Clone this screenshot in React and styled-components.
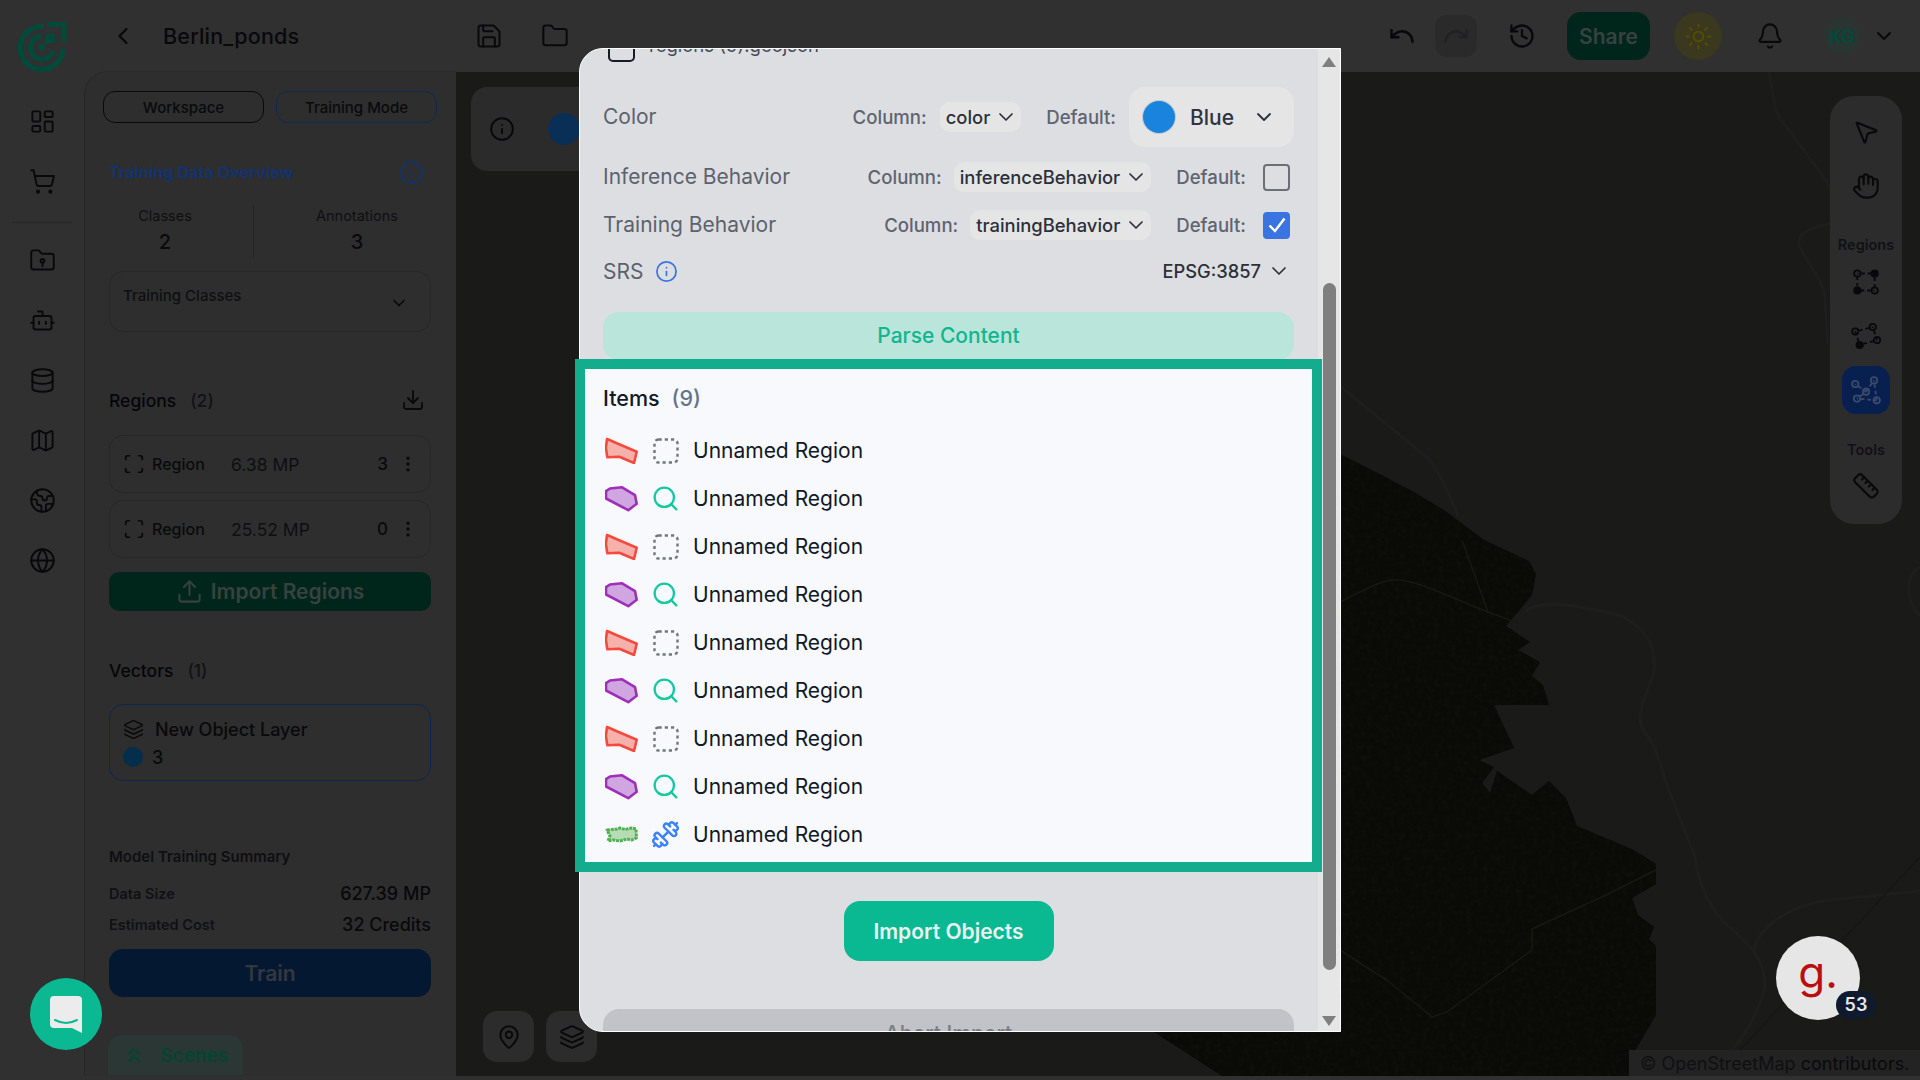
import React from 'react';
import styled, { createGlobalStyle } from 'styled-components';
import {
  Bell, Bot, ChevronDown, ChevronLeft, ChevronsUp, Database, Download, Dumbbell, EllipsisVertical,
  Earth, Folder, Globe, Hand, History, Info, Layers, LayoutDashboard, Map as MapIcon,
  MapPin, MousePointer2, Redo, Ruler, Save, Scan, Search, ShoppingCart, Sun, Undo, Upload,
} from 'lucide-react';

const GlobalStyle = createGlobalStyle`
  html, body { margin: 0; padding: 0; background: #303030; }
  * { box-sizing: border-box; }
  body { font-family: Inter, "Liberation Sans", sans-serif; }
`;

const DARK = '#09090c';
const TEAL = '#0ab892';

const Page = styled.div`
  position: relative;
  width: 1920px;
  height: 1080px;
  overflow: hidden;
  display: flex;
  background: #303030;
  color: ${DARK};
`;

/* left rail */
const Rail = styled.nav`
  width: 84px;
  flex: none;
  display: flex;
  flex-direction: column;
  padding: 16px 0 0 0;
`;

const Logo = styled.svg`
  display: block;
  margin: 0 0 11px 10px;
`;

const RailItem = styled.div`
  width: 84px;
  height: 60px;
  display: flex;
  align-items: center;
  justify-content: center;
`;

const RailDivider = styled.div`
  width: 60px;
  height: 1px;
  margin: 11px 0 7px 12px;
  background: #262628;
`;

const Column = styled.div`
  flex: 1;
  min-width: 0;
  display: flex;
  flex-direction: column;
`;

/* top bar */
const TopBar = styled.header`
  height: 72px;
  flex: none;
  display: flex;
  align-items: center;
  padding: 0 24px 0 25px;
`;

const BackWrap = styled.div`
  display: flex;
  width: 28px;
`;

const Title = styled.h1`
  width: 310px;
  margin: 0 0 0 26px;
  font-size: 21.5px;
  font-weight: 500;
  letter-spacing: 0.2px;
  color: ${DARK};
`;

const TopIcon = styled.div`
  display: flex;
  align-items: center;
  justify-content: center;
  flex: none;
  width: ${p => p.$w || 28}px;
  height: ${p => p.$h || 28}px;
  margin-left: ${p => p.$ml || 0}px;
  border-radius: ${p => p.$radius || 0};
  background: ${p => p.$bg || 'transparent'};
`;

const Spacer = styled.div`
  flex: 1;
`;

const ShareButton = styled.div`
  width: 83px;
  height: 48px;
  margin-left: 31px;
  display: flex;
  align-items: center;
  justify-content: center;
  border-radius: 14px;
  background: #00261c;
  color: #37423f;
  font-size: 21px;
  font-weight: 600;
`;

const Avatar = styled.div`
  width: 36px;
  height: 36px;
  margin-left: 40px;
  display: flex;
  align-items: center;
  justify-content: center;
  border-radius: 50%;
  background: #283531;
  color: #004a39;
  font-size: 18px;
  font-weight: 700;
`;

const Body = styled.div`
  height: 1004px;
  display: flex;
`;

/* side panel */
const Panel = styled.aside`
  width: 372px;
  flex: none;
  border-left: 1px solid #272729;
  border-top: 1px solid #2a2a2c;
  border-top-left-radius: 24px;
  background: #2e2e2e;
  margin-top: -1px;
`;

const ModeRow = styled.div`
  display: flex;
  gap: 12px;
  padding: 19px 19px 0 18px;
`;

const ModeButton = styled.div`
  flex: 1;
  height: 32px;
  display: flex;
  align-items: center;
  justify-content: center;
  border: 1px solid ${p => (p.$active ? '#0b2a55' : '#09090c')};
  border-radius: 12px;
  font-size: 15px;
  font-weight: 500;
  color: #0a0a0d;
`;

const PanelBody = styled.div`
  padding: 0 25px 0 24px;
  position: relative;
`;

const OverviewHead = styled.div`
  height: 24px;
  margin-top: 37px;
  display: flex;
  align-items: center;
  justify-content: space-between;
  padding-right: 7px;
  font-size: 16.2px;
  font-weight: 700;
  color: #12336e;
`;

const Stats = styled.div`
  height: 53px;
  margin-top: 21px;
  display: flex;
`;

const Stat = styled.div`
  display: flex;
  flex-direction: column;
  align-items: center;
  width: ${p => p.$w}px;
  padding: ${p => p.$pad};
  border-right: ${p => (p.$divider ? '1px solid #232326' : 'none')};
  font-size: 14.5px;
  color: #0f0f13;
  padding-top: 2px;
`;

const StatValue = styled.div`
  margin-top: 6px;
  font-size: 20px;
  font-weight: 500;
  color: #0a0a0d;
`;

const ClassesBox = styled.div`
  height: 61px;
  margin-top: 13px;
  display: flex;
  justify-content: space-between;
  padding: 14px 21px 0 13px;
  border: 1px solid #272729;
  border-radius: 14px;
  font-size: 15px;
  font-weight: 500;
  color: #0f0f13;
`;

const ClassesChevron = styled.div`
  margin-top: 7px;
  height: 20px;
`;

const SectionHead = styled.div`
  height: 28px;
  margin-top: ${p => p.$mt}px;
  display: flex;
  align-items: center;
  justify-content: space-between;
  padding-right: 6px;
  font-size: 17.5px;
  font-weight: 500;
  color: #060609;
`;

const Count = styled.span`
  margin-left: 14px;
  color: #121216;
`;

const RegionRow = styled.div`
  height: 58px;
  margin-top: ${p => p.$mt}px;
  display: flex;
  align-items: center;
  padding: 0 12px 0 13px;
  border: 1px solid #272729;
  border-radius: 14px;
  font-size: 16px;
  font-weight: 500;
`;

const RegionName = styled.span`
  margin-left: 7px;
  width: 79px;
  color: #0a0a0d;
`;

const RegionSize = styled.span`
  flex: 1;
  font-size: 17.5px;
  font-weight: 400;
  color: #0f0f13;
`;

const RegionCount = styled.span`
  font-size: 17px;
  color: #09090c;
`;

const KebabWrap = styled.span`
  display: flex;
  margin-left: 10px;
`;

const ImportRegions = styled.div`
  height: 39px;
  margin-top: 14px;
  display: flex;
  align-items: center;
  justify-content: center;
  gap: 8px;
  border-radius: 10px;
  background: #00261c;
  font-size: 21px;
  font-weight: 600;
  color: #37423f;
`;

const VectorCard = styled.div`
  height: 77px;
  margin-top: 20px;
  padding: 11px 14px 0 13px;
  border: 1px solid #0c2650;
  border-radius: 14px;
`;

const VectorLine = styled.div`
  display: flex;
  align-items: center;
  height: 26px;
  margin-top: ${p => p.$mt || 0}px;
  gap: ${p => p.$gap}px;
  font-size: 18px;
  font-weight: 500;
  color: #09090c;
`;

const VectorDot = styled.span`
  width: 20px;
  height: 20px;
  border-radius: 50%;
  background: #032e4c;
`;

const SummaryTitle = styled.div`
  height: 20px;
  margin-top: 66px;
  font-size: 15px;
  font-weight: 600;
  line-height: 20px;
  color: #0f0f13;
`;

const SummaryRow = styled.div`
  height: 24px;
  margin-top: ${p => p.$mt}px;
  display: flex;
  align-items: center;
  justify-content: space-between;
  font-size: 14.5px;
  font-weight: 600;
  color: #111115;
`;

const SummaryValue = styled.span`
  font-size: 18px;
  font-weight: 500;
  color: #09090c;
`;

const TrainButton = styled.div`
  height: 48px;
  margin-top: 13px;
  display: flex;
  align-items: center;
  justify-content: center;
  border-radius: 14px;
  background: #051832;
  font-size: 21px;
  font-weight: 600;
  color: #33383f;
`;

const ScenesTab = styled.div`
  width: 135px;
  height: 40px;
  margin: 38px 0 0 -1px;
  display: flex;
  align-items: center;
  gap: 14px;
  padding-left: 14px;
  border-radius: 14px 14px 0 0;
  background: #2b3735;
  font-size: 19px;
  font-weight: 600;
  color: #00452f;
`;

/* map */
const MapArea = styled.main`
  position: relative;
  flex: 1;
  background: #1a1a19;
  overflow: hidden;
`;

const MapArt = styled.svg`
  position: absolute;
  left: 0;
  top: 0;
`;

const InfoBar = styled.div`
  position: absolute;
  left: 15px;
  top: 15px;
  width: 200px;
  height: 84px;
  display: flex;
  align-items: center;
  gap: 33px;
  padding-left: 18px;
  border-radius: 16px;
  background: #2b2b2c;
`;

const InfoDot = styled.span`
  width: 32px;
  height: 32px;
  border-radius: 50%;
  background: #0a2f56;
`;

const MapButtons = styled.div`
  position: absolute;
  left: 27px;
  bottom: 14px;
  display: flex;
  gap: 12px;
`;

const MapButton = styled.div`
  width: 51px;
  height: 51px;
  display: flex;
  align-items: center;
  justify-content: center;
  border-radius: 14px;
  background: #2c2c2d;
`;

const ToolPanel = styled.div`
  position: absolute;
  right: 18px;
  top: 24px;
  width: 72px;
  height: 428px;
  display: flex;
  flex-direction: column;
  align-items: center;
  border-radius: 24px;
  background: #2c2c2d;
`;

const ToolItem = styled.div`
  width: 48px;
  height: 48px;
  flex: none;
  margin-top: ${p => p.$mt || 0}px;
  display: flex;
  align-items: center;
  justify-content: center;
  border-radius: 14px;
  background: ${p => (p.$active ? '#072050' : 'transparent')};
`;

const ToolLabel = styled.div`
  height: 20px;
  margin-top: ${p => p.$mt}px;
  font-size: 14.5px;
  font-weight: 600;
  line-height: 20px;
  color: #111115;
`;

const Attribution = styled.div`
  position: absolute;
  right: 0;
  bottom: 0;
  width: 291px;
  height: 26px;
  display: flex;
  align-items: center;
  padding-left: 11px;
  background: #232323;
  font-size: 18px;
  white-space: nowrap;
  color: #0a0a0c;
`;

const AttributionLink = styled.span`
  color: #101012;
`;

/* floating widgets */
const ChatBubble = styled.div`
  position: absolute;
  left: 30px;
  top: 978px;
  width: 72px;
  height: 72px;
  display: flex;
  align-items: center;
  justify-content: center;
  border-radius: 50%;
  background: ${TEAL};
`;

const GradeBadge = styled.div`
  position: absolute;
  left: 1776px;
  top: 936px;
  width: 84px;
  height: 84px;
  display: flex;
  align-items: center;
  justify-content: center;
  border-radius: 50%;
  background: #e6e6e6;
  color: #b90f0f;
  font-size: 44px;
  font-weight: 400;
  line-height: 1;
  padding-bottom: 12px;
`;

const GradeCount = styled.span`
  position: absolute;
  left: 60px;
  top: 55px;
  width: 40px;
  height: 28px;
  display: flex;
  align-items: center;
  justify-content: center;
  border-radius: 14px;
  background: #0f1a2e;
  color: #e8e8e8;
  font-size: 18px;
  font-weight: 600;
`;

/* modal */
const Modal = styled.section`
  position: absolute;
  left: 579px;
  top: 48px;
  width: 762px;
  height: 984px;
  display: flex;
  background: #dddee1;
  border: 1px solid #fff;
  border-radius: 24px 0 0 24px;
`;

const ModalContent = styled.div`
  position: relative;
  z-index: 1;
  width: 738px;
  flex: none;
  padding: 0 24px 0 23px;
  clip-path: inset(0 -10px 0 -10px);
`;

const FileRow = styled.div`
  height: 27px;
  margin-top: -14px;
  display: flex;
  gap: 14px;
  padding-left: 5px;
  font-size: 18.5px;
  color: #454b5a;
`;

const FileBox = styled.div`
  width: 27px;
  height: 27px;
  border: 2.5px solid #171b24;
  border-radius: 5px;
`;

const FileName = styled.span`
  margin-top: -1px;
  line-height: 22px;
`;

const FieldRow = styled.div`
  height: ${p => p.$h}px;
  margin-top: ${p => p.$mt}px;
  display: flex;
  align-items: center;
  padding-right: ${p => p.$pr || 0}px;
`;

const FieldLabel = styled.span`
  margin: -1px auto 0 0;
  font-size: 21px;
  color: #5c626d;
`;

const FieldHint = styled.span`
  margin: ${p => p.$m || '0'};
  font-size: 18.6px;
  font-weight: 500;
  color: #5e6470;
`;

const SelectBox = styled.div`
  height: 30px;
  display: flex;
  align-items: center;
  gap: 4px;
  padding: 0 3px 0 6px;
  border-radius: 10px;
  background: #e5e5e6;
  font-size: 18.4px;
  font-weight: 500;
  color: #2b303b;
`;

const ColorSelect = styled.div`
  width: 165px;
  height: 60px;
  margin-left: 13px;
  display: flex;
  align-items: center;
  padding: 0 18px 0 14px;
  border-radius: 16px;
  background: #e5e5e6;
  font-size: 21px;
  font-weight: 500;
  color: #2f3440;
`;

const ColorDot = styled.span`
  width: 32px;
  height: 32px;
  flex: none;
  margin-right: 15px;
  border-radius: 50%;
  background: #1a83dd;
  box-shadow: 0 0 0 1px #c3cbd3;
`;

const ColorName = styled.span`
  flex: 1;
`;

const Check = styled.div`
  width: 27px;
  height: 27px;
  margin-left: 17px;
  display: flex;
  align-items: center;
  justify-content: center;
  border: 2.5px solid ${p => (p.$on ? '#3a74e0' : '#6b7078')};
  border-radius: 4px;
  background: ${p => (p.$on ? '#3a74e0' : 'transparent')};
`;

const SrsLabel = styled.span`
  display: flex;
  align-items: center;
  gap: 12px;
  margin-right: auto;
  font-size: 21px;
  color: #5c626d;
`;

const SrsValue = styled.span`
  display: flex;
  align-items: center;
  gap: 6px;
  font-size: 18.3px;
  font-weight: 500;
  color: #2b303b;
`;

const ParseButton = styled.div`
  height: 48px;
  margin-top: 29px;
  padding-bottom: 1px;
  display: flex;
  align-items: center;
  justify-content: center;
  border-radius: 16px;
  background: #b9e5db;
  font-size: 21px;
  font-weight: 500;
  color: #10b68f;
`;

const ItemsBox = styled.div`
  width: 747px;
  margin: -1px 0 0 -28px;
  padding: 15px 0 4px 18px;
  border: 10px solid #13ad8e;
  background: #f8f9fc;
`;

const ItemsHead = styled.div`
  height: 28px;
  display: flex;
  align-items: center;
  gap: 12px;
  font-size: 21.5px;
  font-weight: 500;
  color: #111827;
`;

const ItemsCount = styled.span`
  color: #64748b;
`;

const ItemsList = styled.ul`
  list-style: none;
  margin: 14px 0 0;
  padding: 0 0 0 2px;
`;

const ItemRow = styled.li`
  height: 48px;
  display: flex;
  align-items: center;
  font-size: 21px;
  color: #111827;
`;

const ShapeSlot = styled.span`
  display: flex;
  width: 48px;
  margin-top: 1px;
`;

const TypeSlot = styled.span`
  display: flex;
  width: ${p => (p.$shift ? 42 : 40)}px;
  margin-left: ${p => (p.$shift ? -2 : 0)}px;
  margin-top: 1px;
`;

const ImportObjects = styled.div`
  width: 210px;
  height: 60px;
  margin: 29px auto 0;
  display: flex;
  align-items: center;
  justify-content: center;
  border-radius: 16px;
  background: ${TEAL};
  font-size: 21px;
  font-weight: 600;
  color: #e8f3ef;
`;

const AbortButton = styled.div`
  height: 48px;
  margin-top: 48px;
  display: flex;
  align-items: center;
  justify-content: center;
  border-radius: 16px;
  background: #c1c3c8;
  font-size: 21px;
  font-weight: 500;
  color: #7a7e88;
`;

const ScrollTrack = styled.div`
  position: relative;
  flex: 1;
  background: #e6e6e6;
`;

const ScrollThumb = styled.div`
  position: absolute;
  left: 5px;
  top: 234px;
  width: 13px;
  height: 687px;
  border-radius: 7px;
  background: #7f7f7f;
`;

const ScrollArrow = styled.div`
  position: absolute;
  left: 4px;
  ${p => (p.$down ? 'bottom: 5px;' : 'top: 8px;')}
  width: 0;
  height: 0;
  border-left: 7.5px solid transparent;
  border-right: 7.5px solid transparent;
  ${p => (p.$down ? 'border-top' : 'border-bottom')}: 10px solid #7f7f7f;
`;

const FOREST =
  '1340,454 1362,465 1414,492 1444,510 1484,540 1529,561 1536,574 1532,595 1506,626 1530,642 1518,650 1540,662 1532,676 1543,685 1549,705 1494,705 1514,748 1479,760 1494,767 1482,783 1490,793 1497,771 1532,795 1549,781 1566,798 1577,826 1634,850 1656,864 1656,884 1632,898 1638,915 1654,927 1649,939 1656,946 1656,1015 1632,1056 1629,1076 1222,1076 1154,1032 1000,900 1200,500';

const ROADS = [
  'M1769 72 C1775 100 1772 110 1785 125 L1825 179 L1845 215',
  'M1880 215 C1840 222 1795 225 1799 245 C1805 262 1825 280 1825 300 L1828 344',
  'M1340 386 L1430 460 C1440 475 1450 495 1458 516',
  'M1525 612 C1535 602 1560 600 1621 616 C1650 630 1656 650 1654 670 C1650 690 1635 710 1642 728 C1655 745 1658 755 1665 780 L1695 857 C1700 900 1725 925 1732 929 C1750 945 1765 960 1765 985 C1760 1010 1745 1035 1732 1050',
  'M1754 950 C1760 925 1790 905 1830 900 L1920 891',
  'M1920 567 C1905 575 1905 600 1920 616',
];

const FOREST_ROADS = [
  'M1340 602 C1365 590 1380 580 1395 580 C1420 580 1455 600 1488 612 L1518 623',
  'M1462 540 L1488 612',
  'M1340 950 L1388 981 L1432 1017 L1447 1012 L1532 950 L1532 929 L1606 895 L1656 870',
];

const RAIL_TOP = [LayoutDashboard, ShoppingCart];
const RAIL_BOTTOM = [Bot, Database, MapIcon, Earth, Globe];

const FolderKeyhole = () => (
  <svg width="27" height="27" viewBox="0 0 24 24" fill="none" stroke="#09090c" strokeWidth="1.7" strokeLinecap="round" strokeLinejoin="round">
    <path d="M20 20a2 2 0 0 0 2-2V8a2 2 0 0 0-2-2h-7.9a2 2 0 0 1-1.69-.9L9.6 3.9A2 2 0 0 0 7.93 3H4a2 2 0 0 0-2 2v13a2 2 0 0 0 2 2Z" />
    <circle cx="12" cy="12.3" r="1.7" />
    <path d="M12 14v3" />
  </svg>
);

const Node = ({ cx, cy, filled, color }) => (
  <circle cx={cx} cy={cy} r="3.2" fill={filled ? color : 'none'} stroke={color} strokeWidth="1.8" />
);

const NodeShape = ({ points, lines, color = '#09090c' }) => (
  <svg width="30" height="30" viewBox="-15 -15 30 30" fill="none">
    {lines.map(([a, b]) => (
      <line
        key={`${a}-${b}`}
        x1={points[a][0]}
        y1={points[a][1]}
        x2={points[b][0]}
        y2={points[b][1]}
        stroke={color}
        strokeWidth="1.8"
        strokeDasharray="3.5 3"
        strokeDashoffset="-4"
      />
    ))}
    {points.map(([x, y, filled]) => (
      <Node key={`${x}-${y}`} cx={x} cy={y} filled={filled} color={color} />
    ))}
  </svg>
);

const RectNodes = () => (
  <NodeShape
    points={[[-8.7, -8.5, false], [8.7, -8.5, true], [8.7, 8.5, false], [-8.7, 8.5, true]]}
    lines={[[0, 1], [1, 2], [2, 3], [3, 0]]}
  />
);

const PolyNodes = () => (
  <NodeShape
    points={[[-10.7, -4.5, false], [6.7, -9, false], [11, 4, false], [-6.3, 9, true]]}
    lines={[[0, 1], [1, 2], [2, 3], [3, 0]]}
  />
);

const MeshNodes = () => (
  <NodeShape
    color="#3c4a6a"
    points={[[-10.7, -6, false], [8, -9.6, false], [0, 1.7, false], [-9, 8.6, false], [10.7, 10.3, false]]}
    lines={[[0, 2], [1, 2], [2, 3], [1, 4], [3, 4]]}
  />
);

const RedShape = () => (
  <svg width="33" height="27" viewBox="0 0 33 27">
    <polygon
      points="2,2 31.7,14.7 29,26 14.3,19.7 2.3,20.3 0.9,10.7"
      fill="#f6b1ac"
      stroke="#f44a3c"
      strokeWidth="2.6"
      strokeLinejoin="round"
    />
  </svg>
);

const PurpleShape = () => (
  <svg width="33" height="27" viewBox="0 0 33 27">
    <polygon
      points="1,6.2 5,3.5 16.7,2.2 30,10.2 31.7,18.8 23.3,25.2 1,13.5"
      fill="#cfa6df"
      stroke="#a02fb8"
      strokeWidth="2.6"
      strokeLinejoin="round"
    />
  </svg>
);

const GreenShape = () => (
  <svg width="33" height="27" viewBox="0 0 33 27">
    <polygon
      points="2,9 12,8 15,7 20,8.5 27,7 31,8 31.5,17 27,19 22,18 15,20 8,19 3,20 5,15"
      fill="#b6dcb6"
      stroke="#4fb04f"
      strokeWidth="3"
      strokeDasharray="3 0.8"
      strokeLinejoin="round"
    />
  </svg>
);

const DashedSquare = () => (
  <svg width="26" height="26" viewBox="0 0 26 26" fill="none">
    <rect x="1.5" y="1.5" width="23" height="23" rx="4" stroke="#71757f" strokeWidth="2.4" strokeDasharray="3.2 3.05" />
  </svg>
);

const SearchType = () => <Search size={29} color="#13c9a2" strokeWidth={1.9} />;
const DumbbellType = () => <Dumbbell size={29} color="#3b82f6" strokeWidth={2} />;

const ITEMS = [
  { shape: RedShape, type: DashedSquare },
  { shape: PurpleShape, type: SearchType, shift: true },
  { shape: RedShape, type: DashedSquare },
  { shape: PurpleShape, type: SearchType, shift: true },
  { shape: RedShape, type: DashedSquare },
  { shape: PurpleShape, type: SearchType, shift: true },
  { shape: RedShape, type: DashedSquare },
  { shape: PurpleShape, type: SearchType, shift: true },
  { shape: GreenShape, type: DumbbellType, shift: true },
];

const App = () => (
  <Page>
    <GlobalStyle />
    <Rail>
      <Logo width="64" height="64" viewBox="0 0 64 64" fill="none" stroke="#004a3c" strokeWidth="5.2">
        <path d="M34 10.5 A21.5 21.5 0 1 0 53.2 33" />
        <path d="M31 20.3 A11.5 11.5 0 1 0 43 35" />
        <path d="M37 8.5 H54 V26" />
        <rect x="36" y="18" width="9" height="9" fill="#004a3c" stroke="none" />
        <circle cx="31.5" cy="31.5" r="3.4" fill="#004a3c" stroke="none" />
        <path d="M32 31 L38 25" strokeWidth="2" />
      </Logo>
      {RAIL_TOP.map((Icon, i) => (
        <RailItem key={i}>
          <Icon size={27} color={DARK} strokeWidth={1.7} />
        </RailItem>
      ))}
      <RailDivider />
      <RailItem><FolderKeyhole /></RailItem>
      {RAIL_BOTTOM.map((Icon, i) => (
        <RailItem key={i}>
          <Icon size={27} color={DARK} strokeWidth={1.7} />
        </RailItem>
      ))}
    </Rail>

    <Column>
      <TopBar>
        <BackWrap>
          <ChevronLeft size={28} color={DARK} strokeWidth={2} />
        </BackWrap>
        <Title>Berlin_ponds</Title>
        <TopIcon $w={32}><Save size={28} color={DARK} strokeWidth={1.7} /></TopIcon>
        <TopIcon $w={32} $ml={34}><Folder size={28} color={DARK} strokeWidth={1.7} /></TopIcon>
        <Spacer />
        <TopIcon><Undo size={28} color={DARK} strokeWidth={2.2} /></TopIcon>
        <TopIcon $w={42} $h={42} $ml={19} $radius="12px" $bg="#2a2a2b"><Redo size={28} color="#222224" strokeWidth={2} /></TopIcon>
        <TopIcon $ml={31}><History size={28} color={DARK} strokeWidth={2} /></TopIcon>
        <ShareButton>Share</ShareButton>
        <TopIcon $w={48} $h={48} $ml={24} $radius="50%" $bg="#3a381e"><Sun size={29} color="#544d00" strokeWidth={1.7} /></TopIcon>
        <TopIcon $ml={34}><Bell size={28} color={DARK} strokeWidth={1.8} /></TopIcon>
        <Avatar>KG</Avatar>
        <TopIcon $w={24} $ml={12}><ChevronDown size={24} color={DARK} strokeWidth={2} /></TopIcon>
      </TopBar>

      <Body>
        <Panel>
          <ModeRow>
            <ModeButton>Workspace</ModeButton>
            <ModeButton $active>Training Mode</ModeButton>
          </ModeRow>
          <PanelBody>
            <OverviewHead>
              Training Data Overview
              <Info size={25} color="#12336e" strokeWidth={1.8} />
            </OverviewHead>
            <Stats>
              <Stat $w={145} $pad="0 32px 0 0" $divider>
                Classes
                <StatValue>2</StatValue>
              </Stat>
              <Stat $w={176} $pad="0 0 0 30px">
                Annotations
                <StatValue>3</StatValue>
              </Stat>
            </Stats>
            <ClassesBox>
              Training Classes
              <ClassesChevron><ChevronDown size={20} color={DARK} strokeWidth={2} /></ClassesChevron>
            </ClassesBox>

            <SectionHead $mt={54}>
              <span>Regions<Count>(2)</Count></span>
              <Download size={24} color={DARK} strokeWidth={1.8} />
            </SectionHead>
            <RegionRow $mt={21}>
              <Scan size={22} color={DARK} strokeWidth={1.9} />
              <RegionName>Region</RegionName>
              <RegionSize>6.38 MP</RegionSize>
              <RegionCount>3</RegionCount>
              <KebabWrap><EllipsisVertical size={20} color={DARK} strokeWidth={2} /></KebabWrap>
            </RegionRow>
            <RegionRow $mt={7}>
              <Scan size={22} color={DARK} strokeWidth={1.9} />
              <RegionName>Region</RegionName>
              <RegionSize>25.52 MP</RegionSize>
              <RegionCount>0</RegionCount>
              <KebabWrap><EllipsisVertical size={20} color={DARK} strokeWidth={2} /></KebabWrap>
            </RegionRow>
            <ImportRegions>
              <Upload size={27} color="#37423f" strokeWidth={1.8} />
              Import Regions
            </ImportRegions>

            <SectionHead $mt={45}>
              <span>Vectors<Count>(1)</Count></span>
            </SectionHead>
            <VectorCard>
              <VectorLine $gap={11}>
                <Layers size={21} color={DARK} strokeWidth={1.7} />
                New Object Layer
              </VectorLine>
              <VectorLine $gap={9} $mt={2}>
                <VectorDot />
                3
              </VectorLine>
            </VectorCard>

            <SummaryTitle>Model Training Summary</SummaryTitle>
            <SummaryRow $mt={14}>
              Data Size
              <SummaryValue>627.39 MP</SummaryValue>
            </SummaryRow>
            <SummaryRow $mt={7}>
              Estimated Cost
              <SummaryValue>32 Credits</SummaryValue>
            </SummaryRow>
            <TrainButton>Train</TrainButton>
            <ScenesTab>
              <ChevronsUp size={24} color="#00452f" strokeWidth={2} />
              Scenes
            </ScenesTab>
          </PanelBody>
        </Panel>

        <MapArea>
          <MapArt width="1464" height="1004" viewBox="456 72 1464 1004" fill="none">
            <defs>
              <filter id="canopy" x="0" y="0" width="100%" height="100%" colorInterpolationFilters="sRGB">
                <feTurbulence type="fractalNoise" baseFrequency="0.18" numOctaves="3" seed="4" />
                <feColorMatrix values="0 0 0 0 0.07  0 0 0 0 0.08  0 0 0 0 0.045  0 0 0 1.2 -0.45" />
                <feComposite in2="SourceGraphic" operator="in" />
                <feMerge>
                  <feMergeNode in="SourceGraphic" />
                  <feMergeNode />
                </feMerge>
              </filter>
            </defs>
            <polygon points={FOREST} fill="#0a0a07" filter="url(#canopy)" />
            {ROADS.map(d => (
              <path key={d} d={d} stroke="#1e1e1e" strokeWidth="3" strokeLinejoin="round" />
            ))}
            {FOREST_ROADS.map(d => (
              <path key={d} d={d} stroke="#181812" strokeWidth="1.5" strokeLinejoin="round" />
            ))}
            <path d="M1920 857 L1740 1050" stroke="#121212" strokeWidth="1" />
          </MapArt>
          <InfoBar>
            <Info size={26} color={DARK} strokeWidth={1.8} />
            <InfoDot />
          </InfoBar>
          <MapButtons>
            <MapButton><MapPin size={26} color={DARK} strokeWidth={1.8} /></MapButton>
            <MapButton><Layers size={26} color={DARK} strokeWidth={1.8} /></MapButton>
          </MapButtons>
          <ToolPanel>
            <ToolItem $mt={12}><MousePointer2 size={28} color={DARK} strokeWidth={1.8} /></ToolItem>
            <ToolItem $mt={6}><Hand size={28} color={DARK} strokeWidth={1.8} /></ToolItem>
            <ToolLabel $mt={25}>Regions</ToolLabel>
            <ToolItem $mt={3}><RectNodes /></ToolItem>
            <ToolItem $mt={6}><PolyNodes /></ToolItem>
            <ToolItem $mt={6} $active><MeshNodes /></ToolItem>
            <ToolLabel $mt={26}>Tools</ToolLabel>
            <ToolItem $mt={2}><Ruler size={28} color={DARK} strokeWidth={1.8} /></ToolItem>
          </ToolPanel>
          <Attribution>
            <AttributionLink>© OpenStreetMap</AttributionLink>&nbsp;contributors.
          </Attribution>
        </MapArea>
      </Body>
    </Column>

    <ChatBubble>
      <svg width="32" height="37" viewBox="0 0 32 37">
        <path d="M4 0 H28 a4 4 0 0 1 4 4 V37 L22 32 H4 a4 4 0 0 1 -4 -4 V4 a4 4 0 0 1 4 -4 Z" fill="#ececec" />
        <path d="M5 24 Q16 30 27 24" fill="none" stroke={TEAL} strokeWidth="2" strokeLinecap="round" />
      </svg>
    </ChatBubble>

    <GradeBadge>
      g.
      <GradeCount>53</GradeCount>
    </GradeBadge>

    <Modal>
      <ModalContent>
        <FileRow>
          <FileBox />
          <FileName>regions (9).geojson</FileName>
        </FileRow>
        <FieldRow $h={60} $mt={25}>
          <FieldLabel>Color</FieldLabel>
          <FieldHint $m="0 13px 0 0">Column:</FieldHint>
          <SelectBox>color <ChevronDown size={24} color="#2b303b" strokeWidth={1.7} /></SelectBox>
          <FieldHint $m="0 0 0 25px">Default:</FieldHint>
          <ColorSelect>
            <ColorDot />
            <ColorName>Blue</ColorName>
            <ChevronDown size={24} color="#2b303b" strokeWidth={1.8} />
          </ColorSelect>
        </FieldRow>
        <FieldRow $h={30} $mt={15} $pr={4}>
          <FieldLabel>Inference Behavior</FieldLabel>
          <FieldHint $m="0 12px 0 0">Column:</FieldHint>
          <SelectBox>inferenceBehavior <ChevronDown size={24} color="#2b303b" strokeWidth={1.7} /></SelectBox>
          <FieldHint $m="0 0 0 25px">Default:</FieldHint>
          <Check />
        </FieldRow>
        <FieldRow $h={30} $mt={18} $pr={4}>
          <FieldLabel>Training Behavior</FieldLabel>
          <FieldHint $m="0 12px 0 0">Column:</FieldHint>
          <SelectBox>trainingBehavior <ChevronDown size={24} color="#2b303b" strokeWidth={1.7} /></SelectBox>
          <FieldHint $m="0 0 0 25px">Default:</FieldHint>
          <Check $on>
            <svg width="20" height="20" viewBox="0 0 20 20" fill="none">
              <path d="M2.5 10.5 L8 16 L17.5 3.5" stroke="#fff" strokeWidth="2.4" />
            </svg>
          </Check>
        </FieldRow>
        <FieldRow $h={24} $mt={19} $pr={3}>
          <SrsLabel>SRS <Info size={23} color="#3a74e0" strokeWidth={1.8} /></SrsLabel>
          <SrsValue>EPSG:3857 <ChevronDown size={24} color="#2b303b" strokeWidth={1.7} /></SrsValue>
        </FieldRow>
        <ParseButton>Parse Content</ParseButton>
        <ItemsBox>
          <ItemsHead>Items <ItemsCount>(9)</ItemsCount></ItemsHead>
          <ItemsList>
            {ITEMS.map(({ shape: Shape, type: Type, shift }, i) => (
              <ItemRow key={i}>
                <ShapeSlot><Shape /></ShapeSlot>
                <TypeSlot $shift={shift}><Type /></TypeSlot>
                Unnamed Region
              </ItemRow>
            ))}
          </ItemsList>
        </ItemsBox>
        <ImportObjects>Import Objects</ImportObjects>
        <AbortButton>Abort Import</AbortButton>
      </ModalContent>
      <ScrollTrack>
        <ScrollArrow />
        <ScrollThumb />
        <ScrollArrow $down />
      </ScrollTrack>
    </Modal>
  </Page>
);

export default App;
